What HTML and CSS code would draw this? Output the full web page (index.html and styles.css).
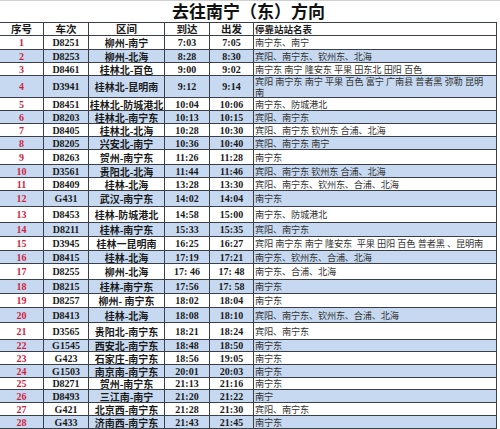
FILE: index.html
```html
<!DOCTYPE html>
<html lang="zh">
<head>
<meta charset="utf-8">
<link rel="stylesheet" href="styles.css">
</head>
<body>
<div class="page">
  <h1 class="title">去往南宁（东）方向</h1>
  <table class="tt">
    <colgroup>
      <col class="c1"><col class="c2"><col class="c3"><col class="c4"><col class="c5"><col class="c6">
    </colgroup>
    <thead>
      <tr class="h12"><th>序号</th><th>车次</th><th>区间</th><th>到达</th><th>出发</th><th class="stops-h">停靠站站名表</th></tr>
    </thead>
    <tbody>
      <tr class="h14"><td class="no">1</td><td>D8251</td><td>柳州-南宁</td><td>7:03</td><td>7:05</td><td class="st">南宁东、南宁</td></tr>
      <tr class="h13 alt"><td class="no">2</td><td>D8253</td><td>柳州-北海</td><td>8:28</td><td>8:30</td><td class="st">宾阳、南宁东、钦州东、北海</td></tr>
      <tr class="h13"><td class="no">3</td><td>D8461</td><td>桂林北-百色</td><td>9:00</td><td>9:02</td><td class="st">南宁东 南宁 隆安东 平果 田东北 田阳 百色</td></tr>
      <tr class="h21 alt"><td class="no">4</td><td>D3941</td><td>桂林北-昆明南</td><td>9:12</td><td>9:14</td><td class="st top">宾阳 南宁东 南宁 平果 百色 富宁 广南县 普者黑 弥勒 昆明<br>南</td></tr>
      <tr class="h13"><td class="no">5</td><td>D8451</td><td>桂林北-防城港北</td><td>10:04</td><td>10:06</td><td class="st">南宁东、防城港北</td></tr>
      <tr class="h13 alt"><td class="no">6</td><td>D8203</td><td>桂林北-南宁东</td><td>10:13</td><td>10:15</td><td class="st">宾阳、南宁东</td></tr>
      <tr class="h13"><td class="no">7</td><td>D8405</td><td>桂林北-北海</td><td>10:28</td><td>10:30</td><td class="st">宾阳、南宁东 钦州东 合浦、北海</td></tr>
      <tr class="h13 alt"><td class="no">8</td><td>D8205</td><td>兴安北-南宁</td><td>10:36</td><td>10:40</td><td class="st">宾阳、南宁东 南宁</td></tr>
      <tr class="h15"><td class="no">9</td><td>D8263</td><td>贺州-南宁东</td><td>11:26</td><td>11:28</td><td class="st">南宁东</td></tr>
      <tr class="h13 alt"><td class="no">10</td><td>D3561</td><td>贵阳北-北海</td><td>11:44</td><td>11:46</td><td class="st">宾阳、南宁东 钦州东 合浦、北海</td></tr>
      <tr class="h13"><td class="no">11</td><td>D8409</td><td>桂林-北海</td><td>13:28</td><td>13:30</td><td class="st">宾阳、南宁东、钦州东、合浦、北海</td></tr>
      <tr class="h16 alt"><td class="no">12</td><td>G431</td><td>武汉-南宁东</td><td>14:02</td><td>14:04</td><td class="st">南宁东</td></tr>
      <tr class="h16"><td class="no">13</td><td>D8453</td><td>桂林-防城港北</td><td>14:58</td><td>15:00</td><td class="st">南宁东、防城港北</td></tr>
      <tr class="h14 alt"><td class="no">14</td><td>D8211</td><td>桂林-南宁东</td><td>15:33</td><td>15:35</td><td class="st">宾阳、南宁东</td></tr>
      <tr class="h14"><td class="no">15</td><td>D3945</td><td>桂林一昆明南</td><td>16:25</td><td>16:27</td><td class="st">宾阳 南宁东 南宁 隆安东&nbsp; 平果 田阳 百色 普者黑 、昆明南</td></tr>
      <tr class="h13 alt"><td class="no">16</td><td>D8415</td><td>桂林-北海</td><td>17:19</td><td>17:21</td><td class="st">南宁东、钦州东、合浦、北海</td></tr>
      <tr class="h16"><td class="no">17</td><td>D8255</td><td>柳州-北海</td><td>17: 46</td><td>17: 48</td><td class="st">南宁东、合浦、北海</td></tr>
      <tr class="h14 alt"><td class="no">18</td><td>D8215</td><td>桂林-南宁东</td><td>17:56</td><td>17: 58</td><td class="st">南宁东</td></tr>
      <tr class="h14"><td class="no">19</td><td>D8257</td><td>柳州- 南宁东</td><td>18:02</td><td>18:04</td><td class="st">南宁东</td></tr>
      <tr class="h15 alt"><td class="no">20</td><td>D8413</td><td>桂林-北海</td><td>18:08</td><td>18:10</td><td class="st">宾阳、南宁东、钦州东、合浦、北海</td></tr>
      <tr class="h17"><td class="no">21</td><td>D3565</td><td>贵阳北-南宁东</td><td>18:21</td><td>18:24</td><td class="st">宾阳、南宁东</td></tr>
      <tr class="h12 alt"><td class="no">22</td><td>G1545</td><td>西安北-南宁东</td><td>18:48</td><td>18:50</td><td class="st">南宁东</td></tr>
      <tr class="h13"><td class="no">23</td><td>G423</td><td>石家庄-南宁东</td><td>18:56</td><td>19:05</td><td class="st">南宁东</td></tr>
      <tr class="h13 alt"><td class="no">24</td><td>G1503</td><td>南京南-南宁东</td><td>20:01</td><td>20:03</td><td class="st">南宁东</td></tr>
      <tr class="h12"><td class="no">25</td><td>D8271</td><td>贺州-南宁东</td><td>21:13</td><td>21:16</td><td class="st">南宁东</td></tr>
      <tr class="h13 alt"><td class="no">26</td><td>D8493</td><td>三江南-南宁</td><td>21:20</td><td>21:22</td><td class="st">南宁</td></tr>
      <tr class="h13"><td class="no">27</td><td>G421</td><td>北京西-南宁东</td><td>21:28</td><td>21:30</td><td class="st">宾阳、南宁东</td></tr>
      <tr class="h13 alt"><td class="no">28</td><td>G433</td><td>济南西-南宁东</td><td>21:43</td><td>21:45</td><td class="st">南宁东</td></tr>
    </tbody>
  </table>
</div>
</body>
</html>
```

FILE: styles.css
```css
html, body {
  margin: 0;
  padding: 0;
  background: #ffffff;
}
.page {
  width: 500px;
  height: 429px;
  overflow: hidden;
  border-top: 1px solid #d0d0d0;
  box-sizing: border-box;
}
.title {
  margin: 0;
  padding: 0 0 1px 172px;
  font-family: "Noto Sans CJK SC", sans-serif;
  font-size: 17px;
  font-weight: 700;
  line-height: 20px;
  color: #111;
}
.tt {
  border-collapse: collapse;
  table-layout: fixed;
  width: 497px;
  margin-left: -1px;
}
.c1 { width: 44px; }
.c2 { width: 45px; }
.c3 { width: 76px; }
.c4 { width: 45px; }
.c5 { width: 44px; }
.c6 { width: 243px; }
.tt th, .tt td {
  border: 1px solid #3a3f48;
  padding: 0;
  text-align: center;
  vertical-align: middle;
  white-space: nowrap;
  font-family: "Liberation Serif", "Noto Sans CJK SC", serif;
  font-size: 10px;
  line-height: 11px;
  font-weight: 700;
  color: #1a1a1a;
}
.tt th {
  font-family: "Noto Sans CJK SC", sans-serif;
  font-size: 10.5px;
  line-height: 12px;
  background: #ffffff;
}
.tt td:nth-child(3) {
  font-family: "Noto Sans CJK SC", sans-serif;
  font-size: 10px;
}
.tt th.stops-h {
  text-align: left;
  font-size: 9.5px;
  padding-left: 1px;
}
.tt td.no {
  color: #cf1f3f;
  font-size: 10px;
}
.tt td.st {
  text-align: left;
  font-family: "Noto Sans CJK SC", sans-serif;
  font-weight: 400;
  font-size: 9.2px;
  color: #333;
  padding-left: 1px;
  letter-spacing: -0.2px;
  word-spacing: 0.5px;
  overflow: hidden;
}
.tt td.top {
  vertical-align: top;
  line-height: 10.5px;
}
.alt td { background: #c6d9f0; }
.h12 { height: 12px; }
.h13 { height: 13px; }
.h14 { height: 14px; }
.h15 { height: 15px; }
.h16 { height: 16px; }
.h17 { height: 17px; }
.h21 { height: 21px; }
```
